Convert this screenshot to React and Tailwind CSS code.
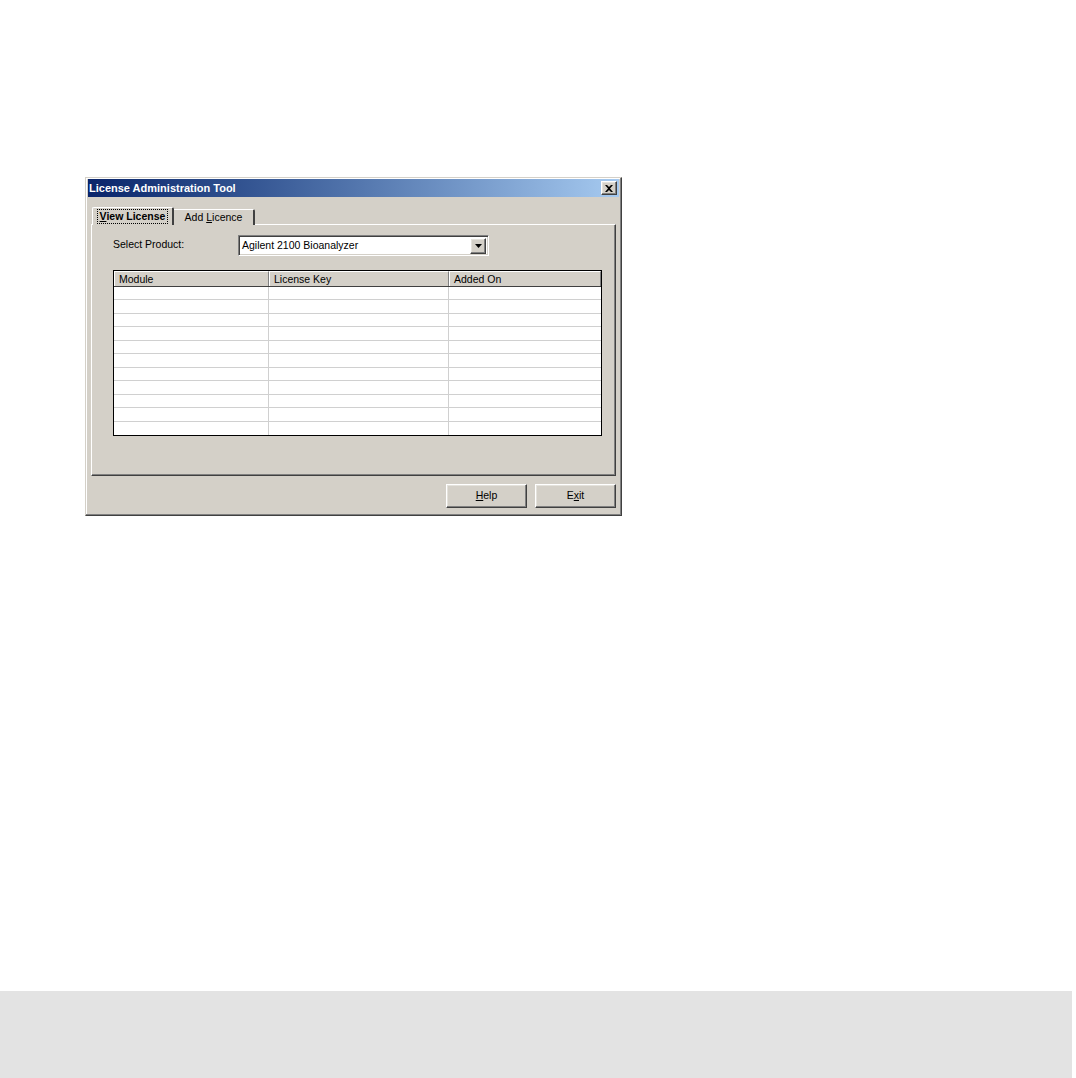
import React from 'react';

const font = { fontFamily: '"Liberation Sans", Arial, sans-serif' };

const columns = [
  { id: 'module', label: 'Module', w: 'w-[155px]' },
  { id: 'key', label: 'License Key', w: 'w-[180px]' },
  { id: 'added', label: 'Added On', w: 'flex-1' },
];

const rows = Array.from({ length: 11 }, (_, i) => i);

const raised =
  'border border-t-white border-l-white border-b-[#404040] border-r-[#404040] shadow-[inset_-1px_-1px_#808080,inset_1px_1px_#e4e2dc]';

const WinButton = ({ children }) => (
  <button
    type="button"
    className={`w-[81px] h-[24px] bg-[#d4d0c8] text-[10.5px] text-black flex items-center justify-center ${raised}`}
  >
    {children}
  </button>
);

const App = () => {
  return (
    <div className="w-[1076px] h-[1078px] bg-white flex flex-col" style={font}>
      <div className="ml-[85px] mt-[177px] w-[537px] h-[339px] bg-[#d4d0c8] border border-t-[#d4d0c8] border-l-[#d4d0c8] border-b-[#404040] border-r-[#404040] shadow-[inset_-1px_-1px_#808080,inset_1px_1px_#ffffff] px-[2px] pt-[1px] flex flex-col">
        {/* title bar */}
        <div className="h-[18px] bg-gradient-to-r from-[#0a246a] to-[#a6caf0] flex items-center justify-between pl-[1px] pr-[2px]">
          <span className="text-white font-bold text-[11px] leading-none">
            License Administration Tool
          </span>
          <div className={`w-[16px] h-[14px] bg-[#d4d0c8] flex items-center justify-center ${raised}`}>
            <svg width="8" height="7" viewBox="0 0 8 7">
              <path d="M0 0h2l2 2 2-2h2L5 3.5 8 7H6L4 5 2 7H0l3-3.5z" fill="#000" />
            </svg>
          </div>
        </div>

        {/* tabs */}
        <div className="mt-[10px] pl-[3px] pr-[3px] flex flex-col">
          <div className="flex items-end h-[18px] pl-[1px] relative z-10 -mb-px">
            <div className="h-[18px] w-[82px] bg-[#d4d0c8] border-t border-l border-t-white border-l-white border-r-[2px] border-r-[#404040] rounded-t-[2px] flex items-center justify-center">
              <span className="text-[10.5px] font-bold leading-[13px] px-[2px] outline outline-1 outline-dotted outline-black">
                <span className="underline">V</span>iew License
              </span>
            </div>
            <div className="h-[16px] w-[81px] bg-[#d4d0c8] border-t border-t-white border-r-[2px] border-r-[#404040] rounded-tr-[2px] flex items-center justify-center text-[10.5px]">
              <span>
                Add <span className="underline">L</span>icence
              </span>
            </div>
          </div>

          {/* panel */}
          <div className="h-[252px] border border-t-white border-l-white border-b-[#404040] border-r-[#404040] shadow-[inset_-1px_-1px_#808080] pl-[21px] pt-[10px] flex flex-col">
            <div className="flex items-start">
              <span className="text-[10.5px] w-[125px] pt-[2px]">Select Product:</span>
              <div className="w-[251px] h-[21px] bg-white border border-t-[#808080] border-l-[#808080] border-b-white border-r-white shadow-[inset_1px_1px_#404040,inset_-1px_-1px_#d4d0c8] flex items-center pl-[3px] pr-[2px]">
                <span className="flex-1 text-[10.5px]">Agilent 2100 Bioanalyzer</span>
                <div className={`w-[16px] h-[16px] bg-[#d4d0c8] flex items-center justify-center ${raised}`}>
                  <svg width="7" height="4" viewBox="0 0 7 4">
                    <path d="M0 0h7L3.5 4z" fill="#000" />
                  </svg>
                </div>
              </div>
            </div>

            {/* table */}
            <div className="mt-[14px] w-[489px] h-[166px] border border-black bg-white flex flex-col">
              <div className="flex h-[16px] bg-[#d4d0c8] border-b border-[#404040]">
                {columns.map((c) => (
                  <div
                    key={c.id}
                    className={`${c.w} h-full text-[10.5px] leading-[14px] pl-[4px] border-t border-l border-t-white border-l-white border-r border-r-[#808080]`}
                  >
                    {c.label}
                  </div>
                ))}
              </div>
              {rows.map((r) => (
                <div key={r} className="flex h-[13.5px] border-b border-[#d0d0d0] last:border-b-0">
                  {columns.map((c) => (
                    <div key={c.id} className={`${c.w} h-full border-r border-[#d0d0d0] last:border-r-0`} />
                  ))}
                </div>
              ))}
            </div>
          </div>

          {/* buttons */}
          <div className="mt-[8px] flex justify-end gap-[8px]">
            <WinButton>
              <span className="underline">H</span>elp
            </WinButton>
            <WinButton>
              E<span className="underline">x</span>it
            </WinButton>
          </div>
        </div>
      </div>

      <div className="mt-auto h-[87px] w-[1072px] bg-[#e3e3e3]" />
    </div>
  );
};

export default App;
